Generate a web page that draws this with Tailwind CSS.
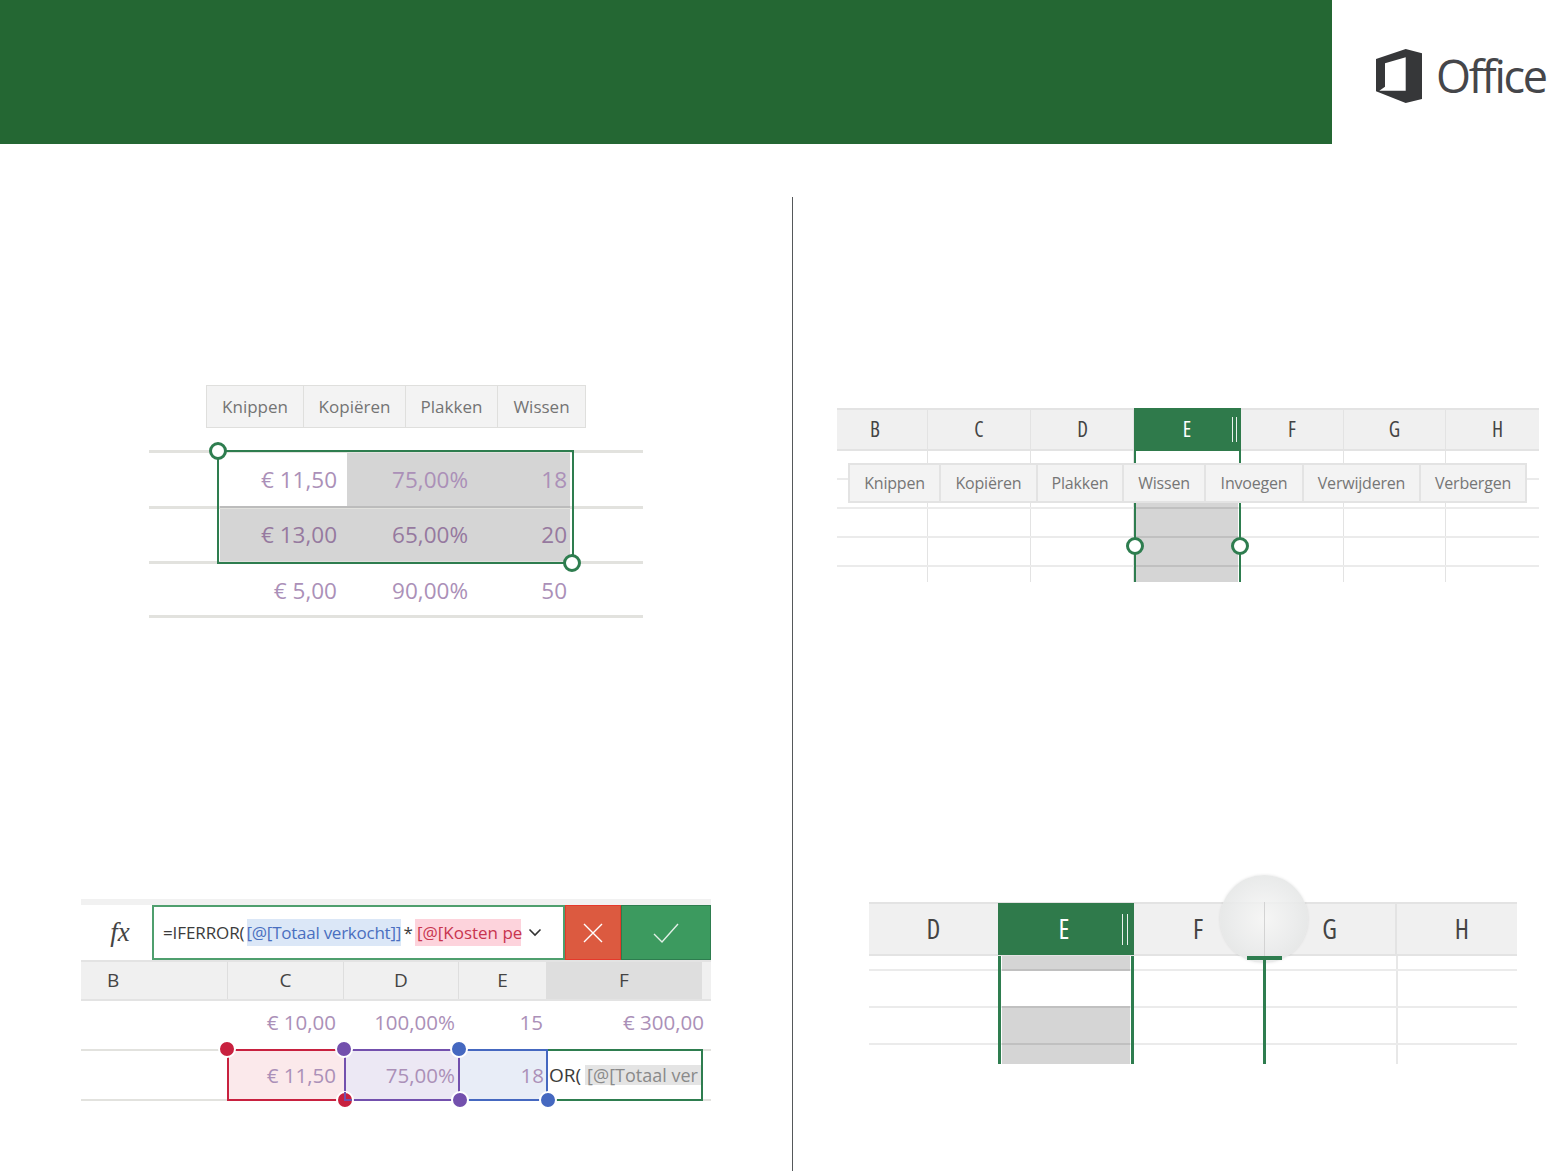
<!DOCTYPE html>
<html lang="nl">
<head>
<meta charset="utf-8">
<title>Office</title>
<script src="https://cdn.jsdelivr.net/npm/@tailwindcss/browser@4"></script>
</head>
<body class="bg-white overflow-hidden font-['Open_Sans',sans-serif]">
<div class="w-[1548px] h-[1171px] overflow-hidden">
  <header class="flex h-[144px]">
    <div class="w-[1332px] bg-[#246733]"></div>
    <div class="flex-1 relative overflow-hidden">
      <svg class="absolute left-[44px] top-[49px]" width="46" height="54" viewBox="0 0 46 54"><path fill-rule="evenodd" fill="#363739" d="M29.7 0L46 4.3V50L29.7 54L0 42.3V10ZM9 14.3V37.700L3.300 41.700H29.700V8.300Z"/></svg>
      <span class="absolute left-[104px] top-[44px] text-[45px] leading-[64px] font-normal tracking-[-2.300px] text-[#45464a]">Office</span>
    </div>
  </header>

  <main class="flex mt-[53px] h-[974px]">
    <section class="w-[793px] shrink-0 border-r border-[#55585a]">
      <!-- Panel 1 -->
      <div class="relative w-[494px] ml-[149px] mt-[188px]">
        <div class="flex w-[380px] h-[43px] ml-[57px] bg-[#f3f3f3] border border-[#dfdfdd] text-[17px] text-[#747474] divide-x divide-[#dfdfdd]">
          <div class="w-[97px] flex items-center justify-center">Knippen</div>
          <div class="w-[102px] flex items-center justify-center">Kopiëren</div>
          <div class="w-[92px] flex items-center justify-center">Plakken</div>
          <div class="flex-1 flex items-center justify-center">Wissen</div>
        </div>
        <div class="mt-[22px] relative text-[22.5px] text-[#ab90b8]">
          <div class="absolute left-[198px] top-[3px] w-[223px] h-[53px] bg-[#d5d5d5]"></div>
          <div class="absolute left-[71px] top-[57px] w-[350px] h-[54px] bg-[#d5d5d5]"></div>
          <div class="relative grid grid-cols-[188px_131px_99px] h-[56px] border-t-[3px] border-[#e2e2de] items-center text-right">
            <span>€ 11,50</span><span>75,00%</span><span>18</span>
          </div>
          <div class="relative grid grid-cols-[188px_131px_99px] h-[55px] border-t-[3px] border-[#e2e2de] items-center text-right text-[#96799f]">
            <span>€ 13,00</span><span>65,00%</span><span>20</span>
          </div>
          <div class="relative grid grid-cols-[188px_131px_99px] h-[57px] border-y-[3px] border-[#e2e2de] items-center text-right pt-[2px]">
            <span>€ 5,00</span><span>90,00%</span><span>50</span>
          </div>
          <div class="absolute left-[71px] top-[56px] w-[350px] h-[2px] bg-[#bcbcbc]"></div>
          <div class="absolute left-[68px] top-0 w-[357px] h-[114px] border-[2.5px] border-[#2e7d4f]"></div>
          <div class="absolute left-[60px] top-[-8px] w-[18px] h-[18px] rounded-full bg-white border-[3px] border-[#2e7d4f]"></div>
          <div class="absolute left-[414px] top-[104px] w-[18px] h-[18px] rounded-full bg-white border-[3px] border-[#2e7d4f]"></div>
        </div>
      </div>

      <!-- Panel 3 -->
      <div class="relative w-[630px] ml-[81px] mt-[281px]">
        <div class="h-[6px] bg-[#f1f1f1]"></div>
        <div class="flex h-[55px]">
          <div class="w-[71px] flex items-center justify-center font-['Liberation_Serif',serif] italic text-[27px] text-[#444] pl-[7px]"><span>fx</span></div>
          <div class="w-[413px] border-[2.5px] border-[#4f9f6e] flex items-center pl-[9px] text-[17px] text-[#3b3b3b] relative overflow-hidden">
            <span class="tracking-[-0.1px]">=IFERROR(</span>
            <span class="ml-[2px] w-[154px] h-[27px] bg-[#dbe7f7] text-[#4a6fc0] leading-[27px] whitespace-nowrap tracking-[-0.25px]">[@[Totaal verkocht]]</span>
            <span class="ml-[3px] mr-[2px]">*</span>
            <span class="w-[106px] h-[27px] bg-[#fdd3dc] text-[#c8354f] leading-[27px] whitespace-nowrap pl-[2px]">[@[Kosten pe</span>
            <svg class="ml-[7px]" width="14" height="9" viewBox="0 0 14 9"><path d="M1.500 1.500L7 7L12.500 1.500" fill="none" stroke="#333" stroke-width="1.600"/></svg>
          </div>
          <div class="w-[56px] bg-[#dc5a40] border border-[#e5392b] flex items-center justify-center">
            <svg width="20" height="20" viewBox="0 0 20 20"><path d="M1 1L19 19M19 1L1 19" stroke="#fff" stroke-width="1.400"/></svg>
          </div>
          <div class="flex-1 bg-[#3c9a5f] border border-[#2e7d4f] flex items-center justify-center">
            <svg width="26" height="20" viewBox="0 0 26 20"><path d="M1 11L9 19L25 1" fill="none" stroke="#fff" stroke-width="1.400" opacity=".85"/></svg>
          </div>
        </div>
        <div class="grid grid-cols-[147px_116px_115px_88px_155px_1fr] h-[41px] bg-[#f0f0f0] border-b-[2px] border-t-[2px] border-[#e3e3e3] text-[19px] text-[#444] text-center items-center divide-x divide-[#dedede]">
          <div class="h-full flex items-center pl-[26px]">B</div>
          <div class="h-full flex items-center justify-center">C</div>
          <div class="h-full flex items-center justify-center">D</div>
          <div class="h-full flex items-center justify-center">E</div>
          <div class="h-full flex items-center justify-center bg-[#dedede]">F</div>
          <div class="h-full"></div>
        </div>
        <div class="grid grid-cols-[255px_119px_88px_161px] h-[48px] items-center text-right text-[20.5px] text-[#ab90b8] pb-[5px]">
          <span>€ 10,00</span><span>100,00%</span><span>15</span><span>€ 300,00</span>
        </div>
        <div class="relative h-[48px] border-y-[2px] box-content border-[#e2e2de] text-[20.5px] text-[#ab90b8]">
          <div class="absolute left-[146px] top-[-2px] h-[52px] flex">
            <div class="w-[117px] bg-[#fbe9eb] border-[2px] border-r-0 border-[#c8213f] flex items-center justify-end pr-[8px]">€ 11,50</div>
            <div class="w-[116px] bg-[#ece8f4] border-[2px] border-[#7350ad] flex items-center justify-end pr-[3px]">75,00%</div>
            <div class="w-[88px] bg-[#e8edf7] border-y-[2px] border-r-[2px] border-[#4568c0] flex items-center justify-end pr-[2px]">18</div>
            <div class="w-[155px] bg-white border-[2px] border-l-0 border-[#2e7d4f] flex items-center overflow-hidden whitespace-nowrap text-[#3b3b3b] text-[19px]">
              <span class="ml-[1px]">OR(</span>
              <span class="ml-[4px] h-[20px] leading-[20px] bg-[#e4e4e4] text-[#8a8a8a] flex-1 pl-[2px] text-[18px]">[@[Totaal ver</span>
            </div>
          </div>
          <div class="absolute left-[137px] top-[-11px] w-[18px] h-[18px] rounded-full bg-[#c8213f] border-2 border-white"></div>
          <div class="absolute left-[254px] top-[-11px] w-[18px] h-[18px] rounded-full bg-[#7350ad] border-2 border-white"></div>
          <div class="absolute left-[369px] top-[-11px] w-[18px] h-[18px] rounded-full bg-[#4568c0] border-2 border-white"></div>
          <div class="absolute left-[255px] top-[40px] w-[18px] h-[18px] rounded-full bg-[#c8213f] border-2 border-white"></div>
          <div class="absolute left-[263px] top-[41px] w-[8px] h-[9px] border-l-2 border-b-2 border-[#7350ad]"></div>
          <div class="absolute left-[370px] top-[40px] w-[18px] h-[18px] rounded-full bg-[#7350ad] border-2 border-white"></div>
          <div class="absolute left-[458px] top-[40px] w-[18px] h-[18px] rounded-full bg-[#4568c0] border-2 border-white"></div>
        </div>
      </div>
    </section>

    <section class="flex-1">
      <!-- Panel 2 -->
      <div class="relative w-[702px] ml-[44px] mt-[211px] h-[174px] overflow-hidden">
        <div class="grid grid-cols-[91px_103px_103px_107px_103px_102px_93px] h-full text-[21px] text-[#444] [font-stretch:85%]">
          <div class="border-r border-[#e3e3e3]"><div class="h-[43px] bg-[#f0f0f0] border-y-2 border-[#e3e3e3] flex items-center justify-center pt-[1px] pr-[14px]">B</div></div>
          <div class="border-r border-[#e3e3e3]"><div class="h-[43px] bg-[#f0f0f0] border-y-2 border-[#e3e3e3] flex items-center justify-center pt-[1px]">C</div></div>
          <div class="border-r border-[#e3e3e3]"><div class="h-[43px] bg-[#f0f0f0] border-y-2 border-[#e3e3e3] flex items-center justify-center pt-[1px] pl-[1px]">D</div></div>
          <div class="relative"><div class="h-[43px] bg-[#2f7a4b] flex items-center justify-center text-white pt-[1px] pr-[1px]">E<span class="absolute right-[4px] top-[9px] h-[25px] w-[5px] border-x border-white/90"></span></div></div>
          <div class="border-r border-[#e3e3e3]"><div class="h-[43px] bg-[#f0f0f0] border-y-2 border-[#e3e3e3] flex items-center justify-center pt-[1px]">F</div></div>
          <div class="border-r border-[#e3e3e3]"><div class="h-[43px] bg-[#f0f0f0] border-y-2 border-[#e3e3e3] flex items-center justify-center pt-[1px]">G</div></div>
          <div><div class="h-[43px] bg-[#f0f0f0] border-y-2 border-[#e3e3e3] flex items-center justify-center pt-[1px] pl-[10px]">H</div></div>
        </div>
        <div class="absolute inset-x-0 top-[70px] border-t-2 border-[#ebebeb]"></div>
        <div class="absolute inset-x-0 top-[99px] border-t-2 border-[#ebebeb]"></div>
        <div class="absolute inset-x-0 top-[128px] border-t-2 border-[#ebebeb]"></div>
        <div class="absolute inset-x-0 top-[157px] border-t-2 border-[#ebebeb]"></div>
        <div class="absolute left-[298px] top-[95px] w-[103px] h-[79px] bg-[#d5d5d5]"></div>
        <div class="absolute left-[298px] top-[99px] w-[103px] border-t-2 border-[#c0c0c0]"></div>
        <div class="absolute left-[298px] top-[128px] w-[103px] border-t-2 border-[#c0c0c0]"></div>
        <div class="absolute left-[298px] top-[157px] w-[103px] border-t-2 border-[#c0c0c0]"></div>
        <div class="absolute left-[297px] top-[43px] w-[107px] h-[131px] border-x-2 border-[#2e7d4f]"></div>
        <div class="absolute left-[11px] top-[55px] w-[679px] h-[40px] flex bg-[#f3f3f3] border-2 border-[#e3e3e3] text-[16px] text-[#767676] divide-x-2 divide-[#e3e3e3] tracking-[-0.2px]">
          <div class="w-[91px] flex items-center justify-center">Knippen</div>
          <div class="w-[97px] flex items-center justify-center">Kopiëren</div>
          <div class="w-[86px] flex items-center justify-center">Plakken</div>
          <div class="w-[82px] flex items-center justify-center">Wissen</div>
          <div class="w-[98px] flex items-center justify-center">Invoegen</div>
          <div class="w-[117px] flex items-center justify-center">Verwijderen</div>
          <div class="flex-1 flex items-center justify-center">Verbergen</div>
        </div>
        <div class="absolute left-[289px] top-[129px] w-[18px] h-[18px] rounded-full bg-white border-[3px] border-[#2e7d4f]"></div>
        <div class="absolute left-[394px] top-[129px] w-[18px] h-[18px] rounded-full bg-white border-[3px] border-[#2e7d4f]"></div>
      </div>

      <!-- Panel 4 -->
      <div class="relative w-[648px] ml-[76px] mt-[320px] h-[162px]">
        <div class="grid grid-cols-[129px_136px_130px_133px_120px] h-[54px] border-y-[2px] border-[#e3e3e3] bg-[#f0f0f0] text-[27px] text-[#444] [font-stretch:85%]">
          <div class="flex items-center justify-center pt-[1px]">D</div>
          <div class="relative flex items-center justify-center bg-[#2f7a4b] text-white -my-[1px] pr-[4px] pt-[1px]">E<span class="absolute right-[6px] top-[11px] h-[31px] w-[6px] border-x border-white/90"></span></div>
          <div class="flex items-center justify-center pr-[2px] pt-[1px]">F</div>
          <div class="flex items-center justify-center border-r-2 border-r-[#e3e3e3] pt-[1px]">G</div>
          <div class="flex items-center justify-center pl-[10px] pt-[1px]">H</div>
        </div>
        <div class="absolute left-[527px] top-[54px] bottom-0 border-l-2 border-[#e8e8e8]"></div>
        <div class="absolute inset-x-0 top-[67px] border-t-2 border-[#ebebeb]"></div>
        <div class="absolute inset-x-0 top-[104px] border-t-2 border-[#ebebeb]"></div>
        <div class="absolute inset-x-0 top-[141px] border-t-2 border-[#ebebeb]"></div>
        <div class="absolute left-[133px] top-[54px] w-[128px] h-[15px] bg-[#d5d5d5] border-b-2 border-[#c0c0c0]"></div>
        <div class="absolute left-[133px] top-[104px] w-[128px] h-[58px] bg-[#d5d5d5] border-t-2 border-[#c0c0c0]">
          <div class="mt-[35px] border-t-2 border-[#c0c0c0]"></div>
        </div>
        <div class="absolute left-[129px] top-[54px] w-[136px] h-[108px] border-x-[3px] border-[#2e7d4f]"></div>
        <div class="absolute left-[351px] top-[-27px] w-[88px] h-[88px] rounded-full bg-radial from-[#f7f7f6]/80 via-[#ebecec]/90 to-[#dfe1e0]/90 shadow-[0_0_3px_rgba(0,0,0,0.1)]"></div>
        <div class="absolute left-[395px] top-[0px] h-[54px] border-l-[1.500px] border-[#d3d3d3]"></div>
        <div class="absolute left-[378px] top-[54px] w-[35px] h-[4px] bg-[#2e7d4f]"></div>
        <div class="absolute left-[394px] top-[58px] w-[3px] h-[104px] bg-[#2e7d4f]"></div>
      </div>
    </section>
  </main>
</div>
</body>
</html>
